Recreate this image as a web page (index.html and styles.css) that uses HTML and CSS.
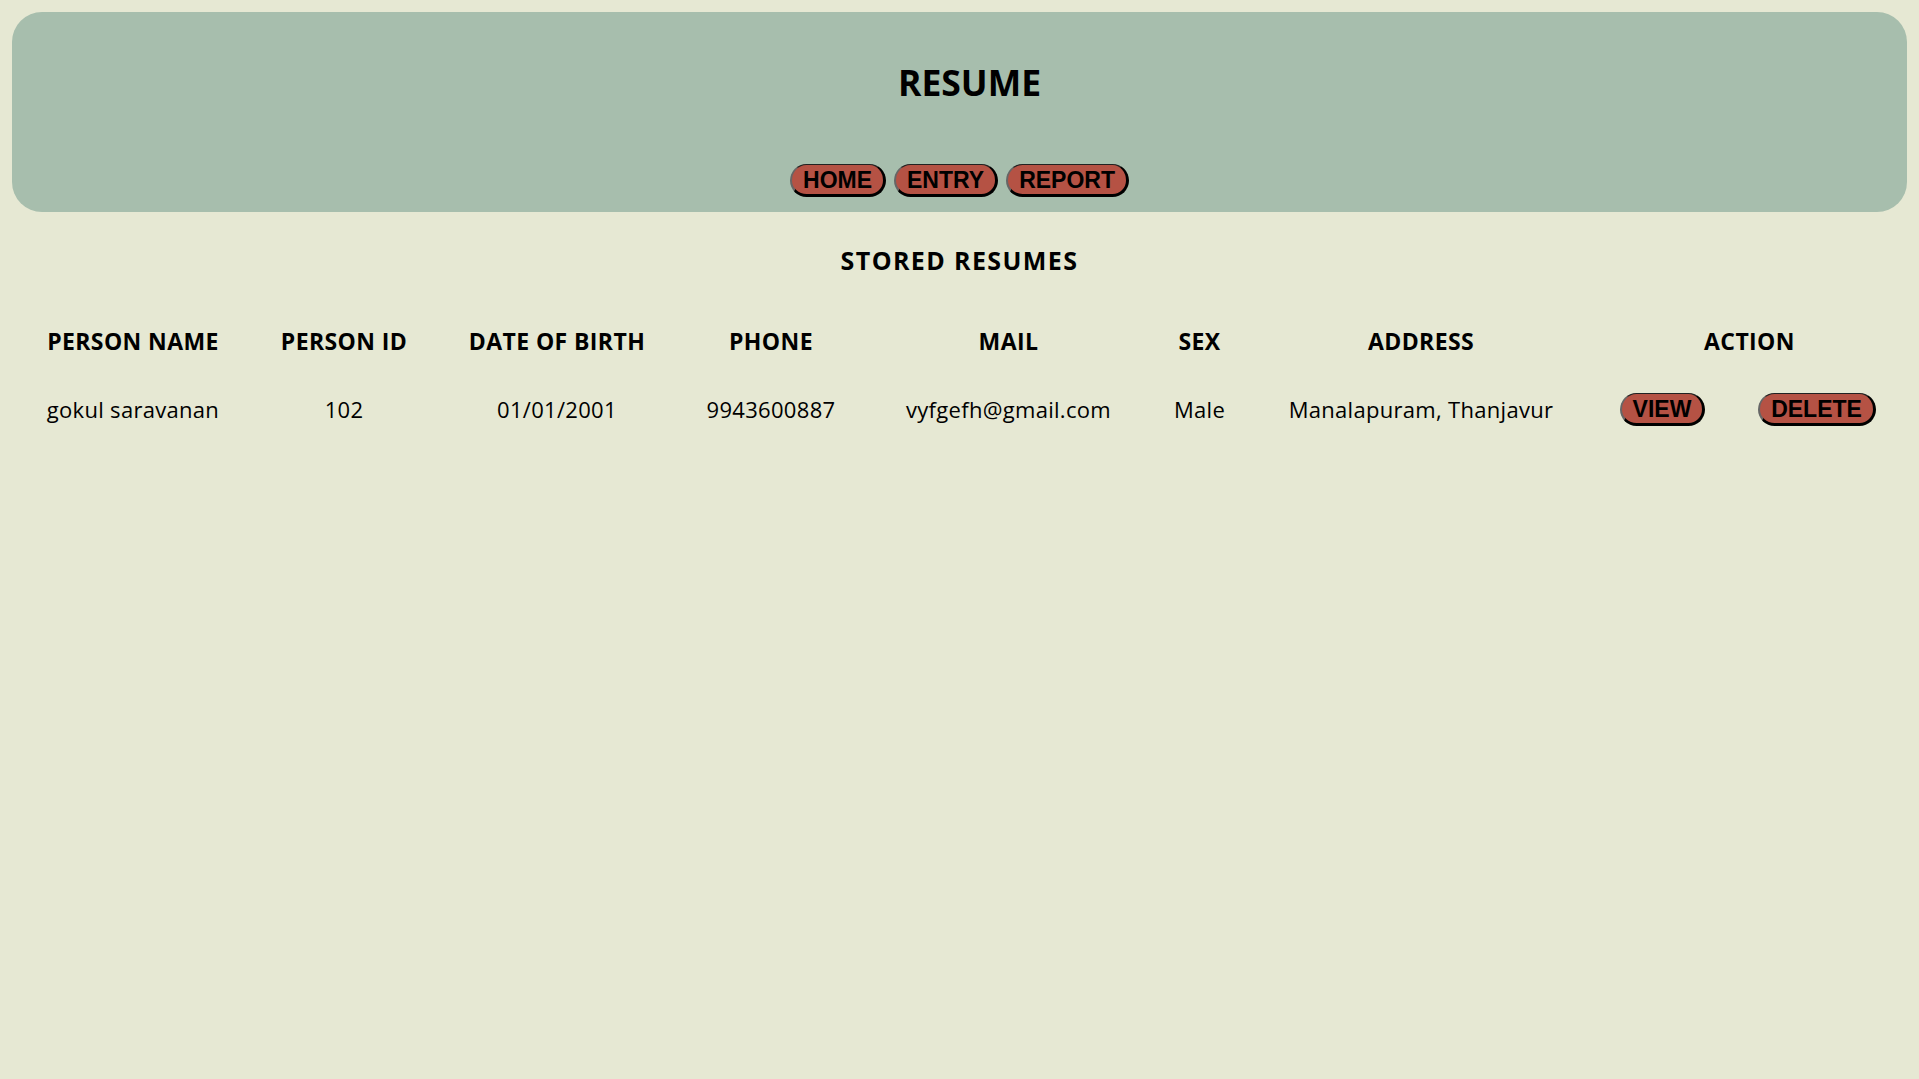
FILE: index.html
```html
<!DOCTYPE html>
<html lang="en">
<head>
<meta charset="utf-8">
<title>Resume</title>
<link rel="stylesheet" href="styles.css">
</head>
<body>
<header class="top">
  <h1 class="title">RESUME</h1>
  <nav class="nav">
    <button class="btn">HOME</button>
    <button class="btn">ENTRY</button>
    <button class="btn">REPORT</button>
  </nav>
</header>
<main class="content">
  <h2 class="subtitle">STORED RESUMES</h2>
  <table class="list">
    <colgroup>
      <col class="c1"><col class="c2"><col class="c3"><col class="c4"><col class="c5"><col class="c6"><col class="c7"><col class="c8"><col class="c9">
    </colgroup>
    <thead>
      <tr>
        <th>PERSON NAME</th>
        <th>PERSON ID</th>
        <th>DATE OF BIRTH</th>
        <th>PHONE</th>
        <th>MAIL</th>
        <th>SEX</th>
        <th>ADDRESS</th>
        <th colspan="2" class="action">ACTION</th>
      </tr>
    </thead>
    <tbody>
      <tr>
        <td>gokul saravanan</td>
        <td>102</td>
        <td>01/01/2001</td>
        <td>9943600887</td>
        <td>vyfgefh@gmail.com</td>
        <td>Male</td>
        <td>Manalapuram, Thanjavur</td>
        <td><button class="btn">VIEW</button></td>
        <td><button class="btn">DELETE</button></td>
      </tr>
    </tbody>
  </table>
</main>
</body>
</html>
```

FILE: styles.css
```css
html, body {
  margin: 0;
  padding: 0;
  background: #e6e8d3;
  font-family: "Open Sans", "Noto Sans", sans-serif;
  color: #000;
}

.top {
  margin: 12px;
  height: 200px;
  background: #a7bead;
  border-radius: 30px;
  display: flex;
  flex-direction: column;
  align-items: center;
  box-sizing: border-box;
  padding-top: 46px;
}

.title {
  margin: 0;
  padding-left: 20px;
  font-size: 35.5px;
  line-height: 48px;
  font-weight: 700;
}

.nav {
  margin-top: 58px;
  display: flex;
  gap: 8px;
}

.btn {
  font-family: "Liberation Sans", Arial, sans-serif;
  font-weight: 700;
  font-size: 23px;
  line-height: 26px;
  color: #000;
  background: #b55244;
  border-radius: 17px;
  border-style: solid;
  border-color: #222 #000 #000 #666;
  border-width: 1px 3px 3px 2px;
  padding: 2px 11px 1px 11px;
  cursor: pointer;
}

.subtitle {
  margin: 32px 0 0;
  text-align: center;
  font-size: 25px;
  line-height: 32px;
  font-weight: 700;
  letter-spacing: 1.4px;
}

.list {
  margin: 49px 0 0 8px;
  width: 1903px;
  table-layout: fixed;
  border-collapse: collapse;
}

.c1 { width: 250px; }
.c2 { width: 172px; }
.c3 { width: 254px; }
.c4 { width: 174px; }
.c5 { width: 301px; }
.c6 { width: 81px; }
.c7 { width: 362px; }
.c8 { width: 121px; }
.c9 { width: 188px; }

.list th, .list td {
  text-align: center;
  padding: 0;
  white-space: nowrap;
}

.list th {
  font-size: 23px;
  font-weight: 700;
  letter-spacing: 0.4px;
  height: 32px;
  line-height: 32px;
}

.list th.action {
  padding-right: 14px;
}

.list td {
  font-size: 22px;
  font-weight: 400;
  letter-spacing: 0.3px;
  padding-top: 34px;
  line-height: 34px;
}
```
